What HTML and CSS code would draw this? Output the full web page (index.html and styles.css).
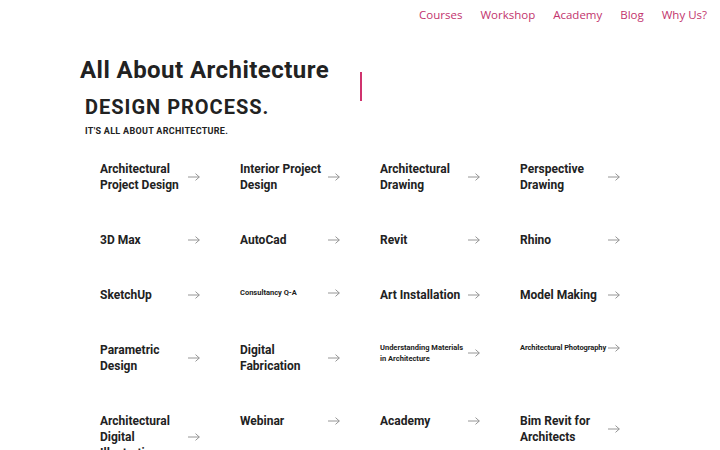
FILE: index.html
```html
<!DOCTYPE html>
<html lang="en">
<head>
<meta charset="utf-8">
<title>All About Architecture</title>
<link rel="stylesheet" href="styles.css">
</head>
<body>
<header class="topbar">
  <nav class="nav">
    <a href="#">Courses</a>
    <a href="#">Workshop</a>
    <a href="#">Academy</a>
    <a href="#">Blog</a>
    <a href="#">Why Us?</a>
  </nav>
</header>
<main class="page">
  <section class="hero">
    <div class="hero-text">
      <h1 class="title">All About Architecture</h1>
      <h2 class="subtitle">DESIGN PROCESS.</h2>
      <p class="tagline">IT'S ALL ABOUT ARCHITECTURE.</p>
    </div>
    <div class="divider"></div>
  </section>
  <section class="grid">
    <a class="item" href="#"><span class="label">Architectural Project Design</span><svg class="arrow" viewBox="0 0 12 8"><path d="M0 4H11.3M7.5 0.6L11.3 4L7.5 7.4"/></svg></a>
    <a class="item" href="#"><span class="label">Interior Project Design</span><svg class="arrow" viewBox="0 0 12 8"><path d="M0 4H11.3M7.5 0.6L11.3 4L7.5 7.4"/></svg></a>
    <a class="item" href="#"><span class="label">Architectural Drawing</span><svg class="arrow" viewBox="0 0 12 8"><path d="M0 4H11.3M7.5 0.6L11.3 4L7.5 7.4"/></svg></a>
    <a class="item" href="#"><span class="label">Perspective Drawing</span><svg class="arrow" viewBox="0 0 12 8"><path d="M0 4H11.3M7.5 0.6L11.3 4L7.5 7.4"/></svg></a>

    <a class="item" href="#"><span class="label">3D Max</span><svg class="arrow" viewBox="0 0 12 8"><path d="M0 4H11.3M7.5 0.6L11.3 4L7.5 7.4"/></svg></a>
    <a class="item" href="#"><span class="label">AutoCad</span><svg class="arrow" viewBox="0 0 12 8"><path d="M0 4H11.3M7.5 0.6L11.3 4L7.5 7.4"/></svg></a>
    <a class="item" href="#"><span class="label">Revit</span><svg class="arrow" viewBox="0 0 12 8"><path d="M0 4H11.3M7.5 0.6L11.3 4L7.5 7.4"/></svg></a>
    <a class="item" href="#"><span class="label">Rhino</span><svg class="arrow" viewBox="0 0 12 8"><path d="M0 4H11.3M7.5 0.6L11.3 4L7.5 7.4"/></svg></a>

    <a class="item" href="#"><span class="label">SketchUp</span><svg class="arrow" viewBox="0 0 12 8"><path d="M0 4H11.3M7.5 0.6L11.3 4L7.5 7.4"/></svg></a>
    <a class="item" href="#"><span class="label small">Consultancy Q-A</span><svg class="arrow" viewBox="0 0 12 8"><path d="M0 4H11.3M7.5 0.6L11.3 4L7.5 7.4"/></svg></a>
    <a class="item" href="#"><span class="label">Art Installation</span><svg class="arrow" viewBox="0 0 12 8"><path d="M0 4H11.3M7.5 0.6L11.3 4L7.5 7.4"/></svg></a>
    <a class="item" href="#"><span class="label">Model Making</span><svg class="arrow" viewBox="0 0 12 8"><path d="M0 4H11.3M7.5 0.6L11.3 4L7.5 7.4"/></svg></a>

    <a class="item" href="#"><span class="label">Parametric Design</span><svg class="arrow" viewBox="0 0 12 8"><path d="M0 4H11.3M7.5 0.6L11.3 4L7.5 7.4"/></svg></a>
    <a class="item" href="#"><span class="label">Digital Fabrication</span><svg class="arrow" viewBox="0 0 12 8"><path d="M0 4H11.3M7.5 0.6L11.3 4L7.5 7.4"/></svg></a>
    <a class="item" href="#"><span class="label small">Understanding Materials in Architecture</span><svg class="arrow" viewBox="0 0 12 8"><path d="M0 4H11.3M7.5 0.6L11.3 4L7.5 7.4"/></svg></a>
    <a class="item" href="#"><span class="label small single">Architectural Photography</span><svg class="arrow" viewBox="0 0 12 8"><path d="M0 4H11.3M7.5 0.6L11.3 4L7.5 7.4"/></svg></a>

    <a class="item" href="#"><span class="label">Architectural Digital Illustrations</span><svg class="arrow" viewBox="0 0 12 8"><path d="M0 4H11.3M7.5 0.6L11.3 4L7.5 7.4"/></svg></a>
    <a class="item" href="#"><span class="label">Webinar</span><svg class="arrow" viewBox="0 0 12 8"><path d="M0 4H11.3M7.5 0.6L11.3 4L7.5 7.4"/></svg></a>
    <a class="item" href="#"><span class="label">Academy</span><svg class="arrow" viewBox="0 0 12 8"><path d="M0 4H11.3M7.5 0.6L11.3 4L7.5 7.4"/></svg></a>
    <a class="item" href="#"><span class="label">Bim Revit for Architects</span><svg class="arrow" viewBox="0 0 12 8"><path d="M0 4H11.3M7.5 0.6L11.3 4L7.5 7.4"/></svg></a>
  </section>
</main>
</body>
</html>
```
FILE: styles.css
```css
* { box-sizing: border-box; }
html, body { margin: 0; padding: 0; background: #fff; }
body {
  font-family: Roboto, "Liberation Sans", Arial, sans-serif;
  color: #222;
  overflow: hidden;
}
a { text-decoration: none; color: inherit; }

.topbar {
  height: 30px;
  display: flex;
  justify-content: flex-end;
  align-items: center;
  padding-right: 13px;
}
.nav {
  display: flex;
  gap: 18px;
  font-family: "Open Sans", "Liberation Sans", sans-serif;
  font-size: 11.5px;
  line-height: 16px;
}
.nav a { color: #c2336d; }

.page { padding-left: 80px; }

.hero { display: flex; }
.hero-text { width: 280px; }
.title {
  margin: 26px 0 0 0;
  font-size: 24px;
  line-height: 28px;
  font-weight: 700;
  letter-spacing: 0.45px;
  color: #222;
}
.subtitle {
  margin: 11px 0 0 5px;
  font-size: 20px;
  line-height: 24px;
  font-weight: 700;
  letter-spacing: 1px;
  color: #222;
}
.tagline {
  margin: 6px 0 0 5px;
  font-size: 9px;
  line-height: 12px;
  font-weight: 700;
  letter-spacing: 0.3px;
  color: #222;
}
.divider {
  width: 1.5px;
  height: 29px;
  margin-top: 42px;
  background: #d0336e;
}

.grid {
  margin: 24px 0 0 20px;
  display: grid;
  grid-template-columns: repeat(4, 100px);
  column-gap: 40px;
  row-gap: 39px;
  align-items: start;
}
.item {
  display: flex;
  align-items: center;
  justify-content: space-between;
  width: 100px;
}
.label {
  font-size: 12px;
  line-height: 16px;
  font-weight: 700;
  color: #222;
  max-width: 88px;
}
.label.small {
  font-size: 7.5px;
  line-height: 11px;
}
.label.single {
  max-width: none;
  white-space: nowrap;
  letter-spacing: -0.1px;
}
.arrow {
  width: 12px;
  height: 8px;
  flex-shrink: 0;
  fill: none;
  stroke: #8a8a8a;
  stroke-width: 0.9;
}
```
